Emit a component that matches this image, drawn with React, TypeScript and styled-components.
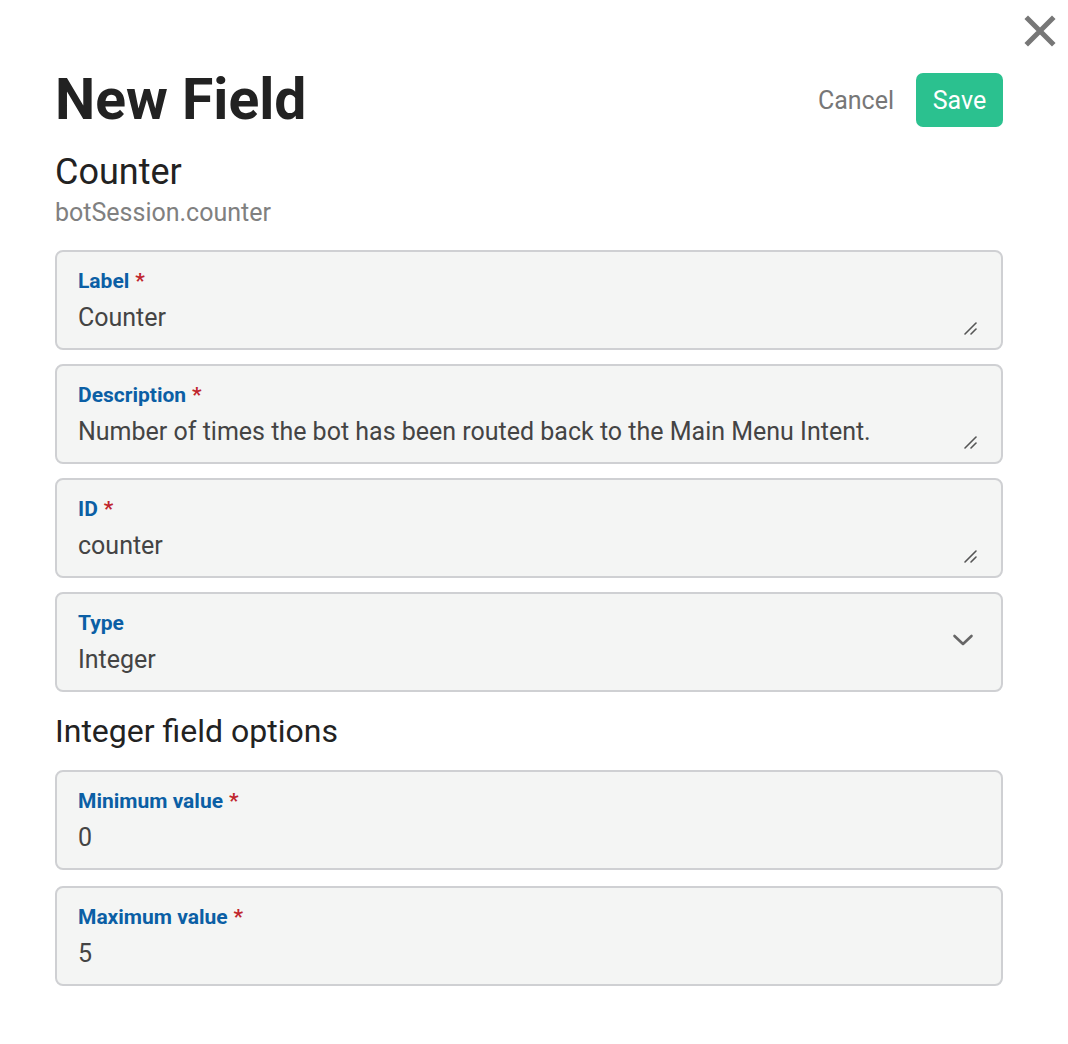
import styled, { createGlobalStyle } from 'styled-components'

const GlobalStyle = createGlobalStyle`
    html, body {
        margin: 0;
        padding: 0;
        background: #fff;
        font-family: Roboto, "Liberation Sans", Arial, sans-serif;
    }
    * {
        box-sizing: border-box;
    }
`

interface IField {
    label: string
    value: string
    required?: boolean
    control?: 'text' | 'select' | 'number'
}

const mainFields: IField[] = [
    { label: "Label", value: "Counter", required: true, control: 'text' },
    { label: "Description", value: "Number of times the bot has been routed back to the Main Menu Intent.", required: true, control: 'text' },
    { label: "ID", value: "counter", required: true, control: 'text' },
    { label: "Type", value: "Integer", control: 'select' },
]

const integerFields: IField[] = [
    { label: "Minimum value", value: "0", required: true, control: 'number' },
    { label: "Maximum value", value: "5", required: true, control: 'number' },
]

const ResizeGrip = () => (
    <svg width="16" height="16" viewBox="0 0 16 16">
        <path d="M2 14 L13 3" stroke="#555" strokeWidth="1.6" strokeLinecap="round" />
        <path d="M8 14 L13 9" stroke="#555" strokeWidth="1.6" strokeLinecap="round" />
    </svg>
)

const Chevron = () => (
    <svg width="22" height="14" viewBox="0 0 22 14">
        <path d="M2.5 3 L11 11 L19.5 3" stroke="#666" strokeWidth="2.6" fill="none" strokeLinecap="round" strokeLinejoin="round" />
    </svg>
)

const FieldBox = ({ label, value, required, control }: IField) => (
    <Field>
        <FieldLabel>
            {label}
            {required && <Req>*</Req>}
        </FieldLabel>
        <FieldValue>{value}</FieldValue>
        {control === 'text' && <Grip><ResizeGrip /></Grip>}
        {control === 'select' && <Caret><Chevron /></Caret>}
    </Field>
)

const App = () => {
    return (
        <Wrap>
            <GlobalStyle />
            <CloseBtn aria-label="close">
                <svg width="32" height="32" viewBox="0 0 32 32">
                    <path d="M4 4 L28 28 M28 4 L4 28" stroke="#777" strokeWidth="5" strokeLinecap="square" />
                </svg>
            </CloseBtn>
            <Header>
                <Title>New Field</Title>
                <Actions>
                    <CancelBtn>Cancel</CancelBtn>
                    <SaveBtn>Save</SaveBtn>
                </Actions>
            </Header>
            <Entity>
                <EntityName>Counter</EntityName>
                <EntityPath>botSession.counter</EntityPath>
            </Entity>
            <FieldList>
                {mainFields.map((f) => <FieldBox key={f.label} {...f} />)}
            </FieldList>
            <SectionTitle>Integer field options</SectionTitle>
            <FieldList $gap={16}>
                {integerFields.map((f) => <FieldBox key={f.label} {...f} />)}
            </FieldList>
        </Wrap>
    );
}

export default App;

const Wrap = styled.div`
    position: relative;
    width: 1068px;
    min-height: 1044px;
    padding: 72px 65px 40px 55px;
    display: flex;
    flex-direction: column;
`

const CloseBtn = styled.button`
    position: absolute;
    top: 15px;
    right: 12px;
    width: 32px;
    height: 32px;
    padding: 0;
    border: none;
    background: transparent;
    display: flex;
    cursor: pointer;
`

const Header = styled.div`
    display: flex;
    align-items: center;
    justify-content: space-between;
    height: 56px;
`

const Title = styled.h1`
    margin: 0;
    font-size: 57px;
    line-height: 56px;
    font-weight: 700;
    color: #222;
`

const Actions = styled.div`
    display: flex;
    align-items: center;
    gap: 22px;
`

const CancelBtn = styled.button`
    border: none;
    background: transparent;
    padding: 0;
    font-family: inherit;
    font-size: 25px;
    color: #777;
    cursor: pointer;
`

const SaveBtn = styled.button`
    width: 87px;
    height: 54px;
    border: none;
    border-radius: 7px;
    background: #2bc18f;
    color: #fff;
    font-family: inherit;
    font-size: 25px;
    cursor: pointer;
`

const Entity = styled.div`
    display: flex;
    flex-direction: column;
    margin-top: 23px;
    margin-bottom: 22px;
`

const EntityName = styled.div`
    font-size: 36px;
    line-height: 42px;
    color: #222;
`

const EntityPath = styled.div`
    font-size: 25px;
    line-height: 30px;
    margin-top: 5px;
    color: #808080;
`

const FieldList = styled.div<{ $gap?: number }>`
    display: flex;
    flex-direction: column;
    gap: ${(p) => p.$gap ?? 14}px;
`

const Field = styled.div`
    position: relative;
    height: 100px;
    border: 2px solid #cfd0d3;
    border-radius: 8px;
    background: #f4f5f4;
    padding: 15px 60px 15px 21px;
    display: flex;
    flex-direction: column;
    gap: 8px;
`

const FieldLabel = styled.div`
    font-size: 21px;
    line-height: 28px;
    font-weight: 700;
    color: #0b5fa5;
`

const Req = styled.span`
    color: #c0262d;
    margin-left: 6px;
`

const FieldValue = styled.div`
    font-size: 25px;
    line-height: 30px;
    color: #444;
    white-space: nowrap;
`

const Grip = styled.span`
    position: absolute;
    right: 22px;
    bottom: 12px;
    display: flex;
`

const Caret = styled.span`
    position: absolute;
    right: 27px;
    top: 39px;
    display: flex;
`

const SectionTitle = styled.h2`
    margin: 20px 0 20px;
    font-size: 32px;
    line-height: 38px;
    font-weight: 400;
    color: #222;
`
